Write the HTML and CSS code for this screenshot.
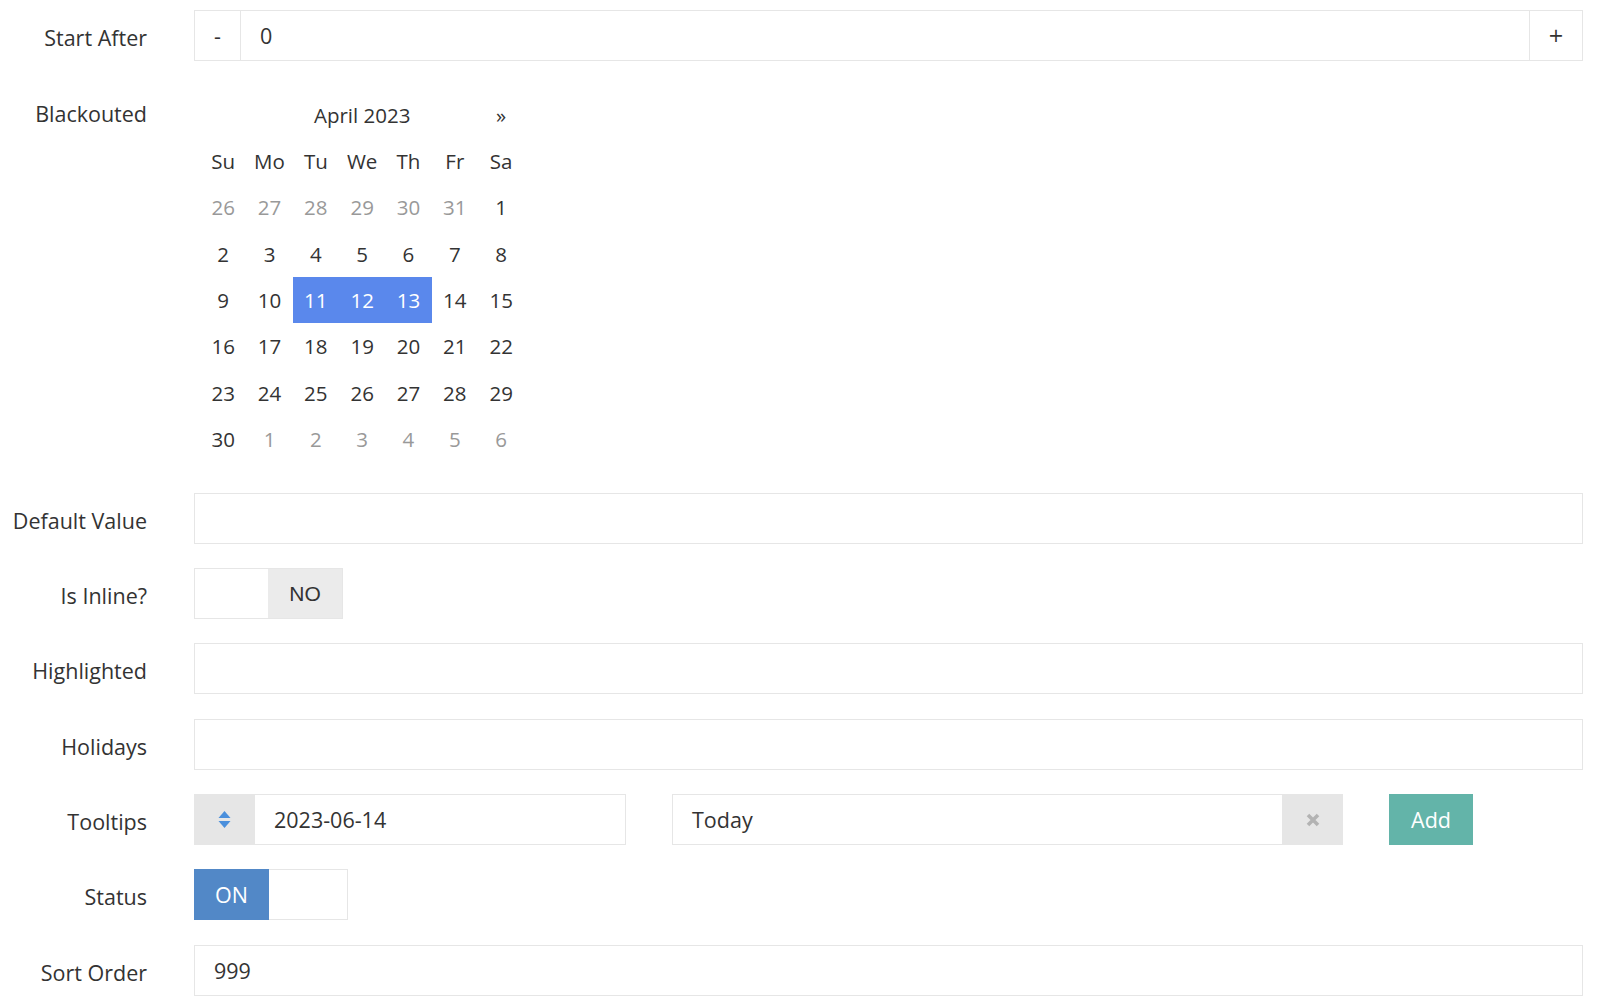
FILE: index.html
```html
<!DOCTYPE html>
<html lang="en">
<head>
<meta charset="utf-8">
<title>Form</title>
<link rel="stylesheet" href="styles.css">
</head>
<body>
<div class="form">
  <div class="row">
    <label class="lbl">Start After</label>
    <div class="group">
      <span class="addon addon-white addon-minus">-</span>
      <div class="input input-mid">0</div>
      <span class="addon addon-white addon-plus">+</span>
    </div>
  </div>

  <div class="row">
    <label class="lbl lbl-cal">Blackouted</label>
    <div class="cal">
      <div class="cal-grid">
        <span class="cell"></span>
        <span class="cell cal-title">April 2023</span>
        <span class="cell">&raquo;</span>

        <span class="cell">Su</span><span class="cell">Mo</span><span class="cell">Tu</span><span class="cell">We</span><span class="cell">Th</span><span class="cell">Fr</span><span class="cell">Sa</span>

        <span class="cell old">26</span><span class="cell old">27</span><span class="cell old">28</span><span class="cell old">29</span><span class="cell old">30</span><span class="cell old">31</span><span class="cell">1</span>
        <span class="cell">2</span><span class="cell">3</span><span class="cell">4</span><span class="cell">5</span><span class="cell">6</span><span class="cell">7</span><span class="cell">8</span>
        <span class="cell">9</span><span class="cell">10</span><span class="cell active">11</span><span class="cell active">12</span><span class="cell active">13</span><span class="cell">14</span><span class="cell">15</span>
        <span class="cell">16</span><span class="cell">17</span><span class="cell">18</span><span class="cell">19</span><span class="cell">20</span><span class="cell">21</span><span class="cell">22</span>
        <span class="cell">23</span><span class="cell">24</span><span class="cell">25</span><span class="cell">26</span><span class="cell">27</span><span class="cell">28</span><span class="cell">29</span>
        <span class="cell">30</span><span class="cell old">1</span><span class="cell old">2</span><span class="cell old">3</span><span class="cell old">4</span><span class="cell old">5</span><span class="cell old">6</span>
      </div>
    </div>
  </div>

  <div class="row">
    <label class="lbl">Default Value</label>
    <div class="input"></div>
  </div>

  <div class="row">
    <label class="lbl">Is Inline?</label>
    <div>
      <div class="switch switch-off">
        <span class="sw-blank"></span>
        <span class="sw-no">NO</span>
      </div>
    </div>
  </div>

  <div class="row">
    <label class="lbl">Highlighted</label>
    <div class="input"></div>
  </div>

  <div class="row">
    <label class="lbl">Holidays</label>
    <div class="input"></div>
  </div>

  <div class="row">
    <label class="lbl">Tooltips</label>
    <div class="tips">
      <div class="group">
        <span class="addon addon-gray addon-sort">
          <svg width="13" height="17" viewBox="0 0 13 17"><path d="M6.5 0 L12.5 7 H0.5 Z" fill="#4a8fdc"/><path d="M0.5 10 H12.5 L6.5 17 Z" fill="#4a8fdc"/></svg>
        </span>
        <div class="input input-right">2023-06-14</div>
      </div>
      <div class="group">
        <div class="input input-left">Today</div>
        <span class="addon addon-gray addon-clear">
          <svg width="14" height="14" viewBox="0 0 14 14"><path d="M2 2 L12 12 M12 2 L2 12" stroke="#b3b3b3" stroke-width="3.6" stroke-linecap="butt"/></svg>
        </span>
      </div>
      <div>
        <button class="btn-add" type="button">Add</button>
      </div>
    </div>
  </div>

  <div class="row">
    <label class="lbl">Status</label>
    <div>
      <div class="switch switch-on">
        <span class="sw-on">ON</span>
        <span class="sw-blank"></span>
      </div>
    </div>
  </div>

  <div class="row">
    <label class="lbl">Sort Order</label>
    <div class="input">999</div>
  </div>
</div>
</body>
</html>
```

FILE: styles.css
```css
html, body {
  margin: 0;
  padding: 0;
  background: #fff;
}

body {
  font-family: "Open Sans", "Liberation Sans", sans-serif;
  font-size: 21.5px;
  color: #333;
}

.form {
  display: flex;
  flex-direction: column;
  gap: 24.33px;
  padding: 10px 17px 0 0;
}

.row {
  display: grid;
  grid-template-columns: 147px 1fr;
  column-gap: 47px;
  align-items: start;
}

.lbl {
  text-align: right;
  line-height: 51px;
  height: 51px;
  padding-top: 2px;
  box-sizing: border-box;
  white-space: nowrap;
  color: #333;
}

.lbl-cal {
  padding-top: 6px;
  line-height: 46.4px;
  height: auto;
}

.input {
  box-sizing: border-box;
  height: 51px;
  border: 1px solid #e6e6e6;
  padding: 0 19px;
  line-height: 49px;
  background: #fff;
  color: #333;
}

.group {
  display: flex;
  height: 51px;
}

.group .input-mid {
  flex: 1;
  border-left: none;
  border-right: none;
}

.group .input-left {
  flex: 1;
  border-right: none;
}

.group .input-right {
  flex: 1;
  border-left: none;
}

.addon {
  box-sizing: border-box;
  height: 51px;
  display: flex;
  align-items: center;
  justify-content: center;
  border: 1px solid #e6e6e6;
  line-height: 1;
}

.addon-white {
  background: #fff;
  color: #333;
}

.addon-minus {
  width: 47px;
}

.addon-plus {
  width: 54px;
  font-family: "DejaVu Sans", sans-serif;
  font-size: 19px;
}

.addon-gray {
  background: #e6e6e6;
  border-color: #e6e6e6;
}

.addon-sort {
  width: 61px;
}

.addon-clear {
  width: 61px;
}

/* calendar */
.cal {
  padding: 6px;
  font-size: 20.5px;
}

.cal-grid {
  display: grid;
  grid-template-columns: repeat(7, 46.33px);
  grid-auto-rows: 46.4px;
}

.cell {
  display: flex;
  align-items: center;
  justify-content: center;
  color: #333;
}

.cal-title {
  grid-column: span 5;
}

.cell.old {
  color: #999;
}

.cell.active {
  background: #5a88ec;
  color: #fff;
}

/* switches */
.switch {
  box-sizing: border-box;
  display: flex;
  height: 51px;
  border: 1px solid #e6e6e6;
  background: #fff;
}

.switch-off {
  width: 149px;
}

.switch-on {
  width: 154px;
}

.sw-blank {
  flex: 1;
}

.sw-no {
  width: 74px;
  background: #ebebeb;
  display: flex;
  align-items: center;
  justify-content: center;
  font-family: "Liberation Sans", Arial, sans-serif;
  font-size: 21px;
  color: #333;
}

.sw-on {
  width: 75px;
  margin: -1px 0 -1px -1px;
  background: #5288c7;
  color: #fff;
  display: flex;
  align-items: center;
  justify-content: center;
}

/* tooltips row */
.tips {
  display: grid;
  grid-template-columns: 432px 671px 1fr;
  column-gap: 46px;
}

.btn-add {
  box-sizing: border-box;
  height: 51px;
  width: 84px;
  border: none;
  background: #63b4a9;
  color: #fff;
  font-family: "Open Sans", sans-serif;
  font-size: 21.5px;
  padding: 0;
  cursor: pointer;
}
```
